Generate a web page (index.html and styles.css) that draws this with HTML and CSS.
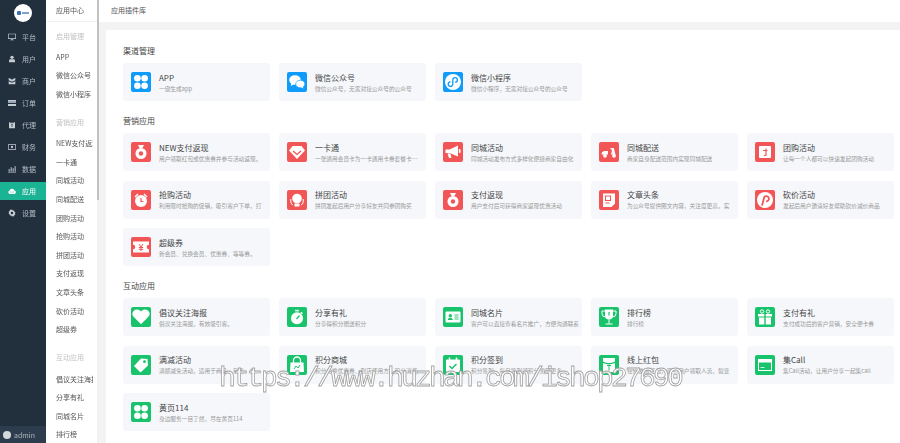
FILE: index.html
```html
<!DOCTYPE html>
<html lang="zh-CN">
<head>
    <meta charset="UTF-8">
    <meta name="viewport" content="width=device-width, initial-scale=1.0">
    <title>应用市场</title>
    <link rel="stylesheet" href="styles.css">
</head>
<body>
<svg class="defs" aria-hidden="true">
    <symbol id="i-clover" viewBox="0 0 20 20"><circle cx="6.400" cy="6.200" r="3.300"/><circle cx="13.600" cy="6.200" r="3.300"/><circle cx="6.400" cy="13.800" r="3.300"/><circle cx="13.600" cy="13.800" r="3.300"/></symbol>
    <symbol id="i-wechat" viewBox="0 0 20 20"><ellipse cx="8" cy="8" rx="5.800" ry="4.800"/><path d="M4.500 11l-.8 3 3-1.600z"/><ellipse cx="13.300" cy="12" rx="4.600" ry="3.800" stroke="#0f9bfa" stroke-width=".7"/><path d="M15.500 14.500l1.200 2-2.800-1.300z"/></symbol>
    <symbol id="i-mini" viewBox="0 0 20 20"><circle cx="10" cy="10" r="8"/><path d="M7.500 9.800A2.300 2.300 0 1 0 9.800 12.100V7.900a2.300 2.300 0 1 1 2.300 2.300" fill="none" stroke="#0f9bfa" stroke-width="1.300"/></symbol>
    <symbol id="i-bag" viewBox="0 0 20 20"><path d="M7 3h6l-1.500 3h-3z"/><circle cx="10" cy="11.500" r="5.500"/><circle cx="10" cy="11.500" r="2.200" fill="#f25555"/></symbol>
    <symbol id="i-gem" viewBox="0 0 20 20"><path d="M5.500 4h9L18 8.500 10 17 2 8.500z"/><path d="M6 9l4 3.500L14 9" fill="none" stroke="#f25555" stroke-width="1.300"/></symbol>
    <symbol id="i-horn" viewBox="0 0 20 20"><path d="M2.500 7.500h4L15 3.500v11l-8.500-3.500h-4z"/><path d="M4.500 11.500h3l1 4.500h-2.500z"/><rect x="15.800" y="7" width="1.800" height="4" rx=".9"/></symbol>
    <symbol id="i-scooter" viewBox="0 0 20 20"><path d="M2.500 12.500a3.500 3.500 0 0 1 3.500-3.500h3v3.500h3l1.200-5H11.500V6h3.300l1.700 6.500z"/><circle cx="6" cy="13.800" r="1.900"/><circle cx="15" cy="13.800" r="1.900"/></symbol>
    <symbol id="i-group" viewBox="0 0 20 20"><rect x="4" y="4" width="12" height="12" rx="1"/><path d="M8 8.500h4.500M11 6.500v6.500l-2 .8" fill="none" stroke="#f25555" stroke-width="1.200"/></symbol>
    <symbol id="i-alarm" viewBox="0 0 20 20"><circle cx="10" cy="11" r="6"/><path d="M3.500 6.500l3-3 1 1-3 3zM16.500 6.500l-3-3-1 1 3 3z"/><path d="M10 8v3.500h2.500" fill="none" stroke="#f25555" stroke-width="1.200"/></symbol>
    <symbol id="i-head" viewBox="0 0 20 20"><circle cx="10" cy="8.500" r="4.800"/><path d="M7.500 13.500h5v3h-5z"/><path d="M3.800 9v3a3 3 0 0 0 2 2.800M16.200 9v3a3 3 0 0 1-2 2.800" fill="none" stroke="#fff" stroke-width="1"/></symbol>
    <symbol id="i-doc" viewBox="0 0 20 20"><path d="M4 3.500h12v10l-3.500 3.500H4z"/><rect x="6.500" y="6" width="5" height="4.500" fill="none" stroke="#f25555" stroke-width="1"/><path d="M6.500 13h4" stroke="#f25555" stroke-width="1"/></symbol>
    <symbol id="i-cut" viewBox="0 0 20 20"><circle cx="10" cy="10" r="8"/><path d="M7 15.500l2.300-8.500a2.600 2.600 0 1 1 1.800 4.300" fill="none" stroke="#f25555" stroke-width="1.800"/></symbol>
    <symbol id="i-ticket" viewBox="0 0 20 20"><path d="M2 4.500h16v3.200a2.300 2.300 0 0 0 0 4.600v3.200H2v-3.200a2.300 2.300 0 0 0 0-4.600z"/><path d="M8 7l2 3 2-3M7.800 10.500h4.400M7.800 12.300h4.400M10 10v4" fill="none" stroke="#f25555" stroke-width="1"/></symbol>
    <symbol id="i-heart" viewBox="0 0 20 20"><path d="M10 17.300L2.800 10a4.500 4.500 0 0 1 0-6.200 4.600 4.600 0 0 1 6.400 0l.8.800.8-.8a4.600 4.600 0 0 1 6.400 0 4.500 4.500 0 0 1 0 6.200z"/></symbol>
    <symbol id="i-watch" viewBox="0 0 20 20"><circle cx="10" cy="11.200" r="6"/><rect x="8.200" y="2.800" width="3.600" height="1.600"/><path d="M14.300 4.800l1.600 1.500-1 1-1.600-1.500z"/><path d="M12.500 8.500l-3 3.500" stroke="#19c36b" stroke-width="1.300"/></symbol>
    <symbol id="i-card" viewBox="0 0 20 20"><rect x="2.500" y="4.500" width="15" height="11" rx="1"/><circle cx="7.300" cy="8.700" r="1.700" fill="#19c36b"/><path d="M4.800 13c0-3 5-3 5 0z" fill="#19c36b"/><path d="M11.500 8h4M11.500 10h4M11.500 12h4" stroke="#19c36b" stroke-width=".9"/></symbol>
    <symbol id="i-cup" viewBox="0 0 20 20"><path d="M6 2.500h8v6a4 4 0 0 1-8 0z"/><path d="M6 4H3v2.500a3.500 3.500 0 0 0 3.500 3.500M14 4h3v2.500a3.500 3.500 0 0 1-3.500 3.500M10 12.500v4M6.500 17h7" fill="none" stroke="#fff" stroke-width="1"/><path d="M10 5v3.500" stroke="#19c36b" stroke-width="1.200"/></symbol>
    <symbol id="i-gift" viewBox="0 0 20 20"><rect x="3" y="7" width="6.300" height="2.500"/><rect x="10.700" y="7" width="6.300" height="2.500"/><rect x="4" y="10.500" width="5.300" height="7"/><rect x="10.700" y="10.500" width="5.300" height="7"/><circle cx="7" cy="4.500" r="1.700" fill="none" stroke="#fff"/><circle cx="13" cy="4.500" r="1.700" fill="none" stroke="#fff"/></symbol>
    <symbol id="i-tag" viewBox="0 0 20 20"><path d="M3 11l7-7.500 6.500.5.500 6.500-7.500 7z"/><circle cx="13.500" cy="6.700" r="1.400" fill="#19c36b"/></symbol>
    <symbol id="i-shop" viewBox="0 0 20 20"><path d="M3.500 7.500h13l.5 9.500H3z"/><path d="M6.500 8V5.500a3.500 3.500 0 0 1 7 0V8" fill="none" stroke="#fff" stroke-width="1.300"/><path d="M7 14l2-3 2 2 2-3" fill="none" stroke="#19c36b" stroke-width="1"/></symbol>
    <symbol id="i-sign" viewBox="0 0 20 20"><rect x="3" y="4.500" width="14" height="12.500" rx="1"/><path d="M6.500 2.500v3M13.500 2.500v3" stroke="#fff" stroke-width="1.500"/><path d="M6.500 11l2.500 2.500 4.500-4.500" fill="none" stroke="#19c36b" stroke-width="1.500"/></symbol>
    <symbol id="i-packet" viewBox="0 0 20 20"><path d="M4 3h12v3.500a13 13 0 0 1-12 0z"/><path d="M4 8a14 14 0 0 0 12 0v9H4z"/><path d="M8 10.500h4M10 10.500v5" stroke="#19c36b" stroke-width="1"/></symbol>
    <symbol id="i-window" viewBox="0 0 20 20"><path fill-rule="evenodd" d="M3 4h14v12H3zM4 7.500V15h12V7.500z"/><path d="M5.500 12.500h4" stroke="#fff" stroke-width=".8"/></symbol>
</svg>

<div class="app">
    <nav class="side">
        <div class="logo"><span class="logo-mark"></span></div>
        <a class="side-item"><svg viewBox="0 0 12 12"><path fill-rule="evenodd" d="M0 1h12v8H7v1h2v1H3v-1h2V9H0zM1 2v6h10V2z"/></svg>平台</a>
        <a class="side-item"><svg viewBox="0 0 12 12"><circle cx="6" cy="3.500" r="2.500"/><path d="M1.500 11V8.500A2 2 0 0 1 3.500 6.500h5a2 2 0 0 1 2 2V11z"/></svg>用户</a>
        <a class="side-item"><svg viewBox="0 0 12 12"><path d="M1 1.500l3 1 2 1.500 2-1.500 3-1v3.500L6 7 1 5zM1 6.500l5 2 5-2V11H1z"/></svg>商户</a>
        <a class="side-item"><svg viewBox="0 0 12 12"><path d="M0 1.500h12v2.500H0zM0 5h12v1H0zM0 7.500h12V10.500H0z"/></svg>订单</a>
        <a class="side-item"><svg viewBox="0 0 12 12"><path d="M1.500 1.500l2 1h5l2-1V11h-9z"/><path d="M4.500 5h3M4.500 7.500h3" stroke="#222f3d"/></svg>代理</a>
        <a class="side-item"><svg viewBox="0 0 12 12"><path fill-rule="evenodd" d="M0 2h12v8H0zM1 3v6h10V3z"/><circle cx="6" cy="6" r="1.700"/></svg>财务</a>
        <a class="side-item"><svg viewBox="0 0 12 12"><path d="M1 6h1.500v4H1zM4 3.500h1.500V10H4zM7 5h1.500v5H7zM10 2h1.500v8H10zM0 10.500h12v.8H0z"/></svg>数据</a>
        <a class="side-item active"><svg viewBox="0 0 12 12"><path d="M3 10.500a2.600 2.600 0 0 1-.6-5.100 3.800 3.800 0 0 1 7.300-.2 2.700 2.700 0 0 1-.2 5.300z"/><circle cx="4.500" cy="7.500" r=".9" fill="#1ab394"/><circle cx="7.700" cy="7.500" r=".9" fill="#1ab394"/></svg>应用</a>
        <a class="side-item"><svg viewBox="0 0 12 12"><path fill-rule="evenodd" d="M6 .8l1.200 1.500 1.900-.2.400 1.900L11.200 5 10.300 6.500 11.200 8 9.500 9l-.4 1.900-1.900-.2L6 11.200 4.800 9.700l-1.900.2L2.500 8 .8 7 1.700 5.500.8 4l1.700-1 .4-1.900 1.900.2zM6 4.200a1.800 1.800 0 1 0 0 3.600 1.800 1.800 0 0 0 0-3.600z"/></svg>设置</a>
        <div class="side-user"><span class="avatar"></span>admin</div>
    </nav>

    <aside class="sub">
        <div class="sub-head">应用中心</div>
        <div class="sub-list">
            <div class="sub-group first">启用管理</div>
            <a>APP</a>
            <a>微信公众号</a>
            <a>微信小程序</a>
            <div class="sub-group">营销应用</div>
            <a>NEW支付返现</a>
            <a>一卡通</a>
            <a>同城活动</a>
            <a>同城配送</a>
            <a>团购活动</a>
            <a>抢购活动</a>
            <a>拼团活动</a>
            <a>支付返现</a>
            <a>文章头条</a>
            <a>砍价活动</a>
            <a>超级券</a>
            <div class="sub-group">互动应用</div>
            <a>倡议关注海报</a>
            <a>分享有礼</a>
            <a>同城名片</a>
            <a>排行榜</a>
        </div>
        <div class="scrollbar"><div class="thumb"></div></div>
    </aside>

    <main class="main">
        <header class="top">应用插件库</header>
        <div class="wrap">
            <div class="panel">
                <h3>渠道管理</h3>
                <div class="grid">
                    <div class="card blue"><svg class="ico"><use href="#i-clover"/></svg><div><b>APP</b><p>一键生成app</p></div></div>
                    <div class="card blue"><svg class="ico"><use href="#i-wechat"/></svg><div><b>微信公众号</b><p>微信公众号，无需对接公众号的公众号</p></div></div>
                    <div class="card blue"><svg class="ico"><use href="#i-mini"/></svg><div><b>微信小程序</b><p>微信小程序，无需对接公众号的公众号</p></div></div>
                </div>

                <h3>营销应用</h3>
                <div class="grid">
                    <div class="card red"><svg class="ico"><use href="#i-bag"/></svg><div><b>NEW支付返现</b><p>用户领取红包或优惠券并参与活动返现。</p></div></div>
                    <div class="card red"><svg class="ico"><use href="#i-gem"/></svg><div><b>一卡通</b><p>一张通用会员卡为一卡通用卡券套餐卡…</p></div></div>
                    <div class="card red"><svg class="ico"><use href="#i-horn"/></svg><div><b>同城活动</b><p>同城活动发布方式多样化便捷商家自由化</p></div></div>
                    <div class="card red"><svg class="ico"><use href="#i-scooter"/></svg><div><b>同城配送</b><p>商家自身配送范围内实现同城配送</p></div></div>
                    <div class="card red"><svg class="ico"><use href="#i-group"/></svg><div><b>团购活动</b><p>让每一个人都可以快速发起团购活动</p></div></div>
                    <div class="card red"><svg class="ico"><use href="#i-alarm"/></svg><div><b>抢购活动</b><p>利用限时抢购的促销，吸引客户下单，打</p></div></div>
                    <div class="card red"><svg class="ico"><use href="#i-head"/></svg><div><b>拼团活动</b><p>拼团发起后用户分享好友共同参团购买</p></div></div>
                    <div class="card red"><svg class="ico"><use href="#i-bag"/></svg><div><b>支付返现</b><p>用户支付后可获得商家返现优惠活动</p></div></div>
                    <div class="card red"><svg class="ico"><use href="#i-doc"/></svg><div><b>文章头条</b><p>为公众号提供图文内容，关注度更高，实</p></div></div>
                    <div class="card red"><svg class="ico"><use href="#i-cut"/></svg><div><b>砍价活动</b><p>发起后用户邀请好友帮助砍价减价商品</p></div></div>
                    <div class="card red"><svg class="ico"><use href="#i-ticket"/></svg><div><b>超级券</b><p>新会员、兑换会员、优惠券、等等券。</p></div></div>
                </div>

                <h3>互动应用</h3>
                <div class="grid">
                    <div class="card green"><svg class="ico"><use href="#i-heart"/></svg><div><b>倡议关注海报</b><p>倡议关注海报，有效吸引客。</p></div></div>
                    <div class="card green"><svg class="ico"><use href="#i-watch"/></svg><div><b>分享有礼</b><p>分享得积分赠送积分</p></div></div>
                    <div class="card green"><svg class="ico"><use href="#i-card"/></svg><div><b>同城名片</b><p>客户可以直接查看名片推广，方便沟通联系</p></div></div>
                    <div class="card green"><svg class="ico"><use href="#i-cup"/></svg><div><b>排行榜</b><p>排行榜</p></div></div>
                    <div class="card green"><svg class="ico"><use href="#i-gift"/></svg><div><b>支付有礼</b><p>支付成功后的客户营销，安全便卡券</p></div></div>
                    <div class="card green"><svg class="ico"><use href="#i-tag"/></svg><div><b>满减活动</b><p>满额减免活动，适用于商品、销售、折</p></div></div>
                    <div class="card green"><svg class="ico"><use href="#i-shop"/></svg><div><b>积分商城</b><p>积分兑换优惠券、到店使用方，积分消费</p></div></div>
                    <div class="card green"><svg class="ico"><use href="#i-sign"/></svg><div><b>积分签到</b><p>积分签到，每日签到领积分奖励更多</p></div></div>
                    <div class="card green"><svg class="ico"><use href="#i-packet"/></svg><div><b>线上红包</b><p>在线发放红包，吸引用户领取人流，裂变</p></div></div>
                    <div class="card green"><svg class="ico"><use href="#i-window"/></svg><div><b>集Call</b><p>集Call活动，让用户分享一起集call</p></div></div>
                    <div class="card green"><svg class="ico"><use href="#i-clover"/></svg><div><b>黄页114</b><p>身边服务一目了然，尽在黄页114</p></div></div>
                </div>
            </div>
        </div>
    </main>
</div>

<div class="mark">https://www.huzhan.com/ishop27690</div>
</body>
</html>
```

FILE: styles.css
```css
* {
    box-sizing: border-box;
}
html, body {
    margin: 0;
    height: 443px;
    overflow: hidden;
}
body {
    font-family: "Noto Sans CJK SC", "Noto Sans", sans-serif;
    background: #f3f3f3;
    color: #444;
}
.defs {
    display: none;
}
.app {
    display: flex;
    height: 443px;
    filter: blur(.35px);
}

/* dark side bar */
.side {
    width: 46px;
    flex: none;
    background: #222f3d;
    display: flex;
    flex-direction: column;
    position: relative;
}
.logo {
    height: 26px;
    padding-top: 4px;
    display: flex;
    justify-content: center;
}
.logo-mark {
    width: 18px;
    height: 18px;
    border-radius: 50%;
    background: #fff;
    position: relative;
}
.logo-mark::before {
    content: "";
    position: absolute;
    left: 3px;
    top: 7px;
    width: 4px;
    height: 4px;
    border-radius: 1px;
    background: #3f6fb5;
}
.logo-mark::after {
    content: "";
    position: absolute;
    left: 8px;
    right: 3px;
    top: 8px;
    height: 2px;
    background: #7f9fd0;
}
.side-item {
    height: 22px;
    display: flex;
    align-items: center;
    padding-left: 8px;
    gap: 6px;
    font-size: 7px;
    color: #b4bcc4;
}
.side-item svg {
    width: 8px;
    height: 8px;
    fill: #c4ccd3;
    flex: none;
}
.side-item.active {
    background: #1ab394;
    color: #fff;
    height: 18px;
    margin: 2px 0;
}
.side-item.active svg {
    fill: #fff;
}
.side-user {
    margin-top: auto;
    height: 17px;
    background: #2e3d4e;
    color: #aeb7c0;
    font-size: 7px;
    display: flex;
    align-items: center;
    gap: 3px;
    padding-left: 3px;
}
.avatar {
    width: 8px;
    height: 8px;
    border-radius: 50%;
    background: #d5dade;
}

/* second column */
.sub {
    width: 53px;
    flex: none;
    background: #fff;
    position: relative;
    overflow: hidden;
}
.sub-head {
    height: 22px;
    line-height: 21px;
    padding-left: 10px;
    font-size: 7px;
    color: #555;
    border-bottom: 1px solid #f0f0f0;
}
.sub-list {
    font-size: 7px;
    padding-left: 10px;
    white-space: nowrap;
}
.sub-list a {
    display: block;
    height: 18.6px;
    line-height: 18.6px;
    color: #555;
    width: 37px;
    overflow: hidden;
}
.sub-group {
    height: 18.6px;
    line-height: 18.6px;
    margin-top: 9.7px;
    margin-bottom: 2.6px;
    color: #c2c2c2;
}
.sub-group.first {
    margin-top: 5px;
    margin-bottom: 2px;
}
.scrollbar {
    position: absolute;
    right: 0;
    top: 0;
    bottom: 0;
    width: 2.5px;
    background: #f1f1f1;
}
.thumb {
    height: 200px;
    background: #c1c1c1;
}

/* main area */
.main {
    flex: 1;
    min-width: 0;
    display: flex;
    flex-direction: column;
}
.top {
    height: 22px;
    line-height: 21px;
    flex: none;
    background: #fff;
    padding-left: 12px;
    font-size: 7px;
    color: #555;
}
.wrap {
    flex: 1;
    padding: 8px 0 0 7px;
    min-height: 0;
}
.panel {
    background: #fff;
    height: 100%;
    padding: 13.5px 0 0 17px;
    overflow: hidden;
}
.panel h3 {
    margin: 0 0 6.5px;
    height: 13px;
    line-height: 13px;
    font-size: 8px;
    font-weight: 400;
    color: #444;
}
.grid + h3 {
    margin-top: 12.5px;
}
.grid {
    display: grid;
    grid-template-columns: repeat(5, 146.5px);
    grid-auto-rows: 38px;
    gap: 9.5px;
}
.card {
    background: #f5f7fa;
    border-radius: 3px;
    display: flex;
    align-items: center;
    padding-left: 8px;
    gap: 8px;
    overflow: hidden;
}
.card b {
    display: block;
    font-size: 8px;
    line-height: 11px;
    font-weight: 400;
    color: #444;
}
.card p {
    margin: 1px 0 0;
    font-size: 5.7px;
    line-height: 9px;
    color: #999;
    white-space: nowrap;
}
.ico {
    width: 20px;
    height: 20px;
    flex: none;
    border-radius: 2px;
    fill: #fff;
}
.blue .ico {
    background: #0f9bfa;
}
.red .ico {
    background: #f25555;
}
.green .ico {
    background: #19c36b;
}

/* site watermark over the page */
.mark {
    position: absolute;
    left: 219px;
    top: 362px;
    font-family: "Liberation Mono", monospace;
    font-size: 28px;
    line-height: 34px;
    letter-spacing: -2.8px;
    white-space: nowrap;
    color: #fff;
    -webkit-text-stroke: .8px #a0a0a0;
}
```
